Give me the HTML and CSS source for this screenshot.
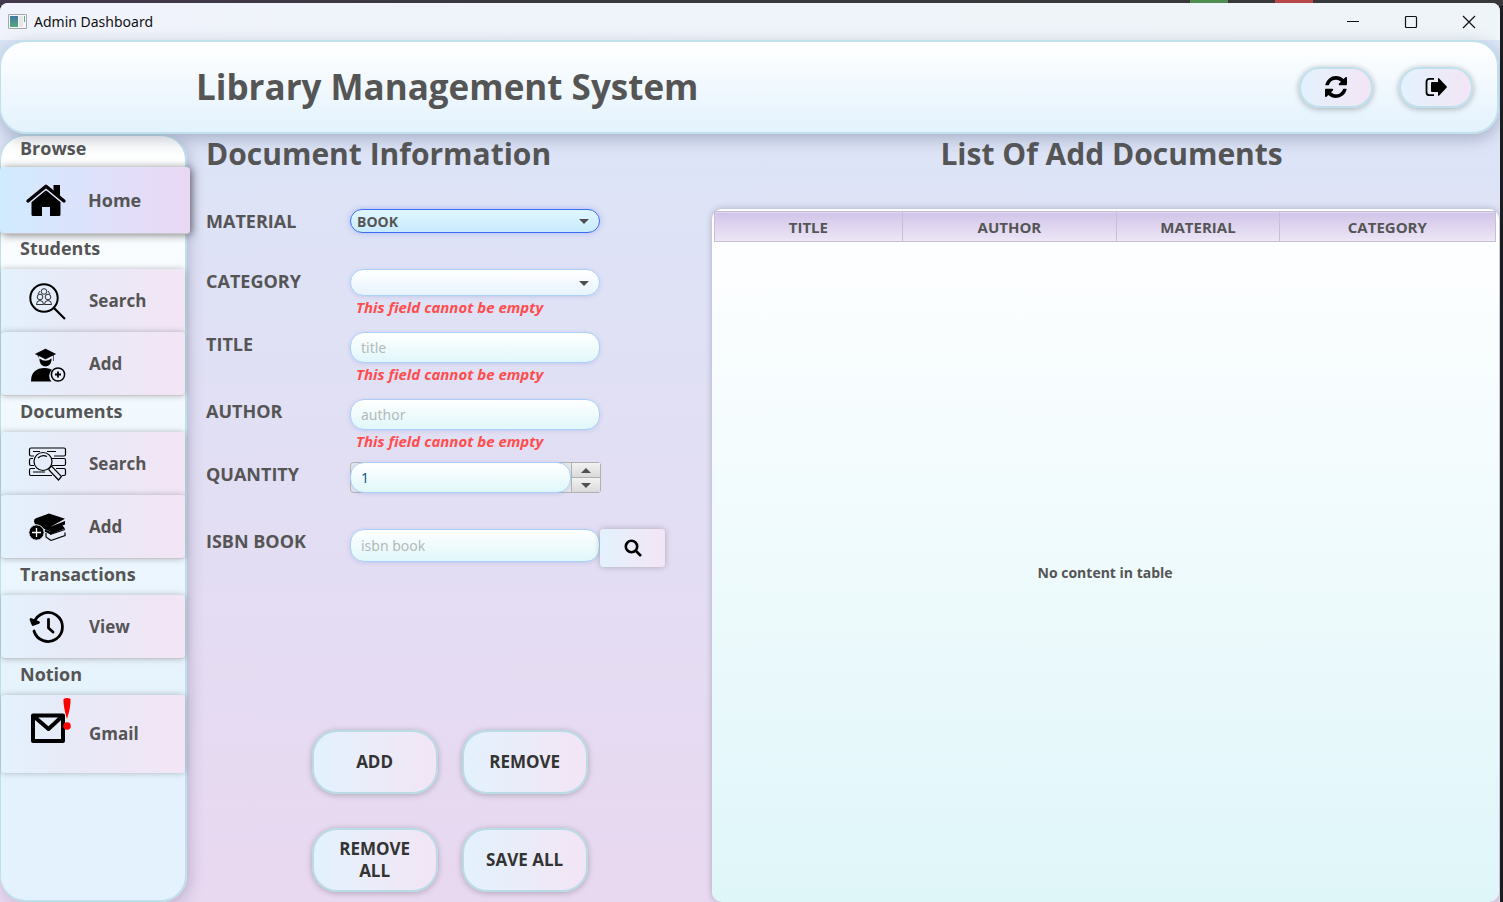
FILE: index.html
```html
<!DOCTYPE html>
<html lang="en">
<head>
<meta charset="utf-8">
<title>Admin Dashboard</title>
<link rel="stylesheet" href="styles.css">
</head>
<body>
<div class="window">
  <div class="titlebar">
    <svg class="app-icon" viewBox="0 0 19 16" aria-hidden="true">
      <defs><linearGradient id="app" x2="0" y2="1"><stop offset="0" stop-color="#4077a8"/><stop offset="1" stop-color="#58a877"/></linearGradient></defs>
      <path fill="#f5f5f5" stroke="#a3a7ae" d="M.5.5h18v14H.5z"/><path fill="url(#app)" d="M2 2h8v11H2z"/><path fill="#e3e8e6" d="M11 2h4v11h-4z"/><path fill="#6aa3a5" d="M16 2h1v6h-1z"/>
    </svg>
    <span class="titlebar-text">Admin Dashboard</span>
    <button class="win-btn" aria-label="Minimize"><svg viewBox="0 0 14 14"><path d="M1 6.500h12"/></svg></button>
    <button class="win-btn" aria-label="Maximize"><svg viewBox="0 0 14 14"><rect x="1.500" y="1.500" width="11" height="11" rx="1"/></svg></button>
    <button class="win-btn" aria-label="Close"><svg viewBox="0 0 14 14"><path d="M1 1l12 12M13 1L1 13"/></svg></button>
  </div>

  <header class="header">
    <h1>Library Management System</h1>
    <button class="pill" aria-label="Refresh">
      <svg viewBox="0 0 1536 1536"><path d="M1511 928q0 5-1 7-64 268-268 434.500t-478 166.500q-146 0-282.500-55t-243.500-157l-129 129q-19 19-45 19t-45-19-19-45v-448q0-26 19-45t45-19h448q26 0 45 19t19 45-19 45l-137 137q71 66 161 102t187 36q134 0 250-65t186-179q11-17 53-117 8-23 30-23h192q13 0 22.500 9.500t9.500 22.500zm25-800v448q0 26-19 45t-45 19h-448q-26 0-45-19t-19-45 19-45l138-138q-148-137-349-137-134 0-250 65t-186 179q-11 17-53 117-8 23-30 23h-199q-13 0-22.500-9.500t-9.500-22.500v-7q65-268 270-434.500t480-166.500q146 0 284 55.500t245 156.500l130-129q19-19 45-19t45 19 19 45z"/></svg>
    </button>
    <button class="pill" aria-label="Log out">
      <svg viewBox="0 0 22 22"><path d="M9 2.800H4.500q-3 0-3 3v10.400q0 3 3 3H9" fill="none" stroke="#000" stroke-width="1.800"/><path d="M6 7q0-1 1-1h6V3q0-1.500 1.200-.5l7.300 7.700q.8.800 0 1.600l-7.300 7.700q-1.200 1-1.200-.5v-3H7q-1 0-1-1z"/></svg>
    </button>
  </header>

  <div class="body">
    <nav class="sidebar">
      <h3>Browse</h3>
      <button class="nav active">
        <svg viewBox="0 0 40 40"><path d="M20 10L34.500 22v12.500q0 1.500-1.500 1.500H24v-9h-8v9H7q-1.500 0-1.500-1.500V22z"/><path d="M2 21L20 6.200 38 21" fill="none" stroke="#e3e4fc" stroke-width="6"/><path d="M2 21L20 6.200 38 21" fill="none" stroke="#000" stroke-width="3.400" stroke-linecap="round" stroke-linejoin="round"/><path d="M27.500 5h6.500v13l-6.500-5.500z"/></svg>
        <span>Home</span>
      </button>

      <h3>Students</h3>
      <button class="nav">
        <svg viewBox="0 0 40 40" fill="none" stroke="#000"><circle cx="17" cy="17" r="13.700" stroke-width="2"/><path d="M27 27L38 38" stroke-width="2.200"/><g stroke-width=".8"><circle cx="17" cy="10.500" r="2.800"/><circle cx="13" cy="16" r="2.800"/><circle cx="21" cy="16" r="2.800"/><path d="M11 13l2-3M23 13l-2-3M9.500 23.500q0-4 3.500-4t3.500 4zM17.500 23.500q0-4 3.500-4t3.500 4z"/></g></svg>
        <span>Search</span>
      </button>
      <button class="nav last">
        <svg viewBox="0 0 40 40"><path d="M18.500 5L28.500 10 18.500 15 8.500 10zM11 11l.5 2.500M26.500 11v6" stroke="#000" stroke-width=".6"/><path d="M12.500 14.500q6 4.500 12 0c.5 5-3 8-6 8s-6.500-3-6-8z"/><path d="M4 37.500q0-13.500 14-13.500 4 0 7 1.700a8 8 0 0 0-.5 11.800z"/><circle cx="31" cy="30.500" r="6.600" fill="none" stroke="#000" stroke-width="1.500"/><path d="M31 27.500v6M28 30.500h6" fill="none" stroke="#000" stroke-width="1.800"/></svg>
        <span>Add</span>
      </button>

      <h3>Documents</h3>
      <button class="nav">
        <svg viewBox="0 0 40 40" fill="none" stroke="#000" stroke-width="1.200"><path d="M7 12H4q-1.500 0-1.500-1.500v-5Q2.500 4 4 4h33q1.500 0 1.500 1.500v5Q38.500 12 37 12H27M6 7.500h7M20 7.500h9M6 14.500H4q-1.500 0-1.500 1.500v4q0 1.500 1.500 1.500h3M25 14.500h12q1.500 0 1.500 1.500v4q0 1.500-1.500 1.500H25M8 24.500H4q-1.500 0-1.500 1.500v4q0 1.500 1.500 1.500h21M29 24.500h8q1.500 0 1.500 1.500v4q0 1.500-1.500 1.500h-2M6 28h12"/><circle cx="16" cy="17.500" r="9"/><path d="M11 14q4-4 9-1.500M22 24.500l2.500-2.500 10 10.500-3 3.500L22 26z"/></svg>
        <span>Search</span>
      </button>
      <button class="nav last">
        <svg viewBox="0 0 40 40"><path d="M7 14q0-2 2-2.800L22 6.500 38 11.800 24 19.500v5.500L13 20q-6-2-6-6z"/><path d="M24 19.500l14-5.500v3.500l-2.500 1 2.500 3-14.500 6-6-3 .5-2 6 2.500z"/><path d="M23 27.500l15-5M24 33.500l14-5v-3M24 33.500l-5-3.500v-4" fill="none" stroke="#000" stroke-width="1.200"/><circle cx="9.500" cy="25.500" r="7.700" stroke="#e8ecfa"/><path d="M9.500 21v9M5 25.500h9" fill="none" stroke="#fff" stroke-width="1.300"/></svg>
        <span>Add</span>
      </button>

      <h3>Transactions</h3>
      <button class="nav last">
        <svg viewBox="0 0 40 40" fill="none" stroke="#000" stroke-width="2.800" stroke-linecap="round" stroke-linejoin="round"><path d="M7 16A14.500 14.500 0 1 1 7 24"/><path d="M21.500 12.500v8.500l4.500 4"/><path d="M4 12.500l2 5 5.500-2z" fill="#000"/></svg>
        <span>View</span>
      </button>

      <h3>Notion</h3>
      <button class="nav mail">
        <svg viewBox="0 0 40 48"><path d="M6 17.500h30v25.500H6zM7 18.500L21.500 31 35 18.500" fill="none" stroke="#000" stroke-width="4" stroke-linejoin="round"/><path d="M36.500 1q3.500-2 7 0 .5 7-3.500 20-4-13-3.500-20z" fill="red"/><circle cx="40" cy="28" r="3.800" fill="red"/></svg>
        <span>Gmail</span>
      </button>
    </nav>

    <main class="main">
      <section class="form-panel">
        <h2>Document Information</h2>
        <form class="form" onsubmit="return false">
          <label for="material">MATERIAL</label>
          <div class="field"><div class="select focus"><select id="material"><option>BOOK</option></select></div></div>

          <label for="category">CATEGORY</label>
          <div class="field"><div class="select"><select id="category"><option></option></select></div><p class="error">This field cannot be empty</p></div>

          <label for="title">TITLE</label>
          <div class="field"><input class="text" id="title" placeholder="title"><p class="error">This field cannot be empty</p></div>

          <label for="author">AUTHOR</label>
          <div class="field"><input class="text" id="author" placeholder="author"><p class="error">This field cannot be empty</p></div>

          <label for="quantity">QUANTITY</label>
          <div class="field"><div class="spinner"><input class="text" id="quantity" value="1"><div class="steps"><button type="button" class="up" aria-label="Increase"></button><button type="button" class="down" aria-label="Decrease"></button></div></div></div>

          <label for="isbn">ISBN BOOK</label>
          <div class="field isbn"><input class="text" id="isbn" placeholder="isbn book"><button type="button" class="lookup" aria-label="Search ISBN"><svg viewBox="0 0 18 18"><circle cx="7.500" cy="7.500" r="5.700"/><path d="M11.500 11.500L17 17"/></svg></button></div>
        </form>
        <div class="actions">
          <button>ADD</button><button>REMOVE</button>
          <button>REMOVE ALL</button><button>SAVE ALL</button>
        </div>
      </section>

      <section class="list-panel">
        <h2>List Of Add Documents</h2>
        <div class="table-box">
          <table>
            <colgroup><col class="c-title"><col class="c-author"><col class="c-material"><col class="c-category"></colgroup>
            <thead><tr><th>TITLE</th><th>AUTHOR</th><th>MATERIAL</th><th>CATEGORY</th></tr></thead>
          </table>
          <div class="empty">No content in table</div>
        </div>
      </section>
    </main>
  </div>
</div>
</body>
</html>
```
FILE: styles.css
```css
* { box-sizing: border-box; }
body {
  margin: 0;
  height: 100vh;
  padding: 3px 3px 0 0;
  display: flex;
  overflow: hidden;
  background:
    linear-gradient(#4f8c50, #4f8c50) 1190px 0 / 38px 3px no-repeat,
    linear-gradient(#b84848, #b84848) 1275px 0 / 38px 3px no-repeat,
    linear-gradient(90deg, #43384d, #38383a 40%) 0 0 / 100% 6px no-repeat,
    #1c1d20;
  font-family: "Open Sans", "Noto Sans", sans-serif;
  font-weight: 700;
  color: #555;
}
h1, h2, h3, p { margin: 0; }
button, input, select { font: inherit; color: inherit; margin: 0; }
button { padding: 0; border: 0; }

.window {
  flex: 1;
  min-width: 0;
  display: flex;
  flex-direction: column;
  border-radius: 8px 8px 0 0;
  overflow: hidden;
  background: linear-gradient(#dbe6f8, #e8d8f0);
}
.titlebar {
  height: 37px;
  flex: none;
  display: flex;
  align-items: center;
  padding: 0 2px 0 8px;
  background: linear-gradient(90deg, #f0f3fb, #eef4f8);
  color: #111;
  font-family: "Noto Sans", sans-serif;
  font-size: 14px;
  font-weight: 400;
}
.app-icon { width: 19px; height: 16px; margin-right: 7px; }
.titlebar-text { flex: 1; }
.win-btn {
  width: 58px;
  height: 36px;
  display: grid;
  place-items: center;
  background: none;
}
.win-btn svg { width: 14px; height: 14px; fill: none; stroke: #111; stroke-width: 1.2; }

.header {
  height: 94px;
  flex: none;
  position: relative;
  z-index: 2;
  display: flex;
  align-items: center;
  gap: 26px;
  margin-right: 1px;
  padding: 0 24px 0 195px;
  border: 2px solid #c0e1eb;
  border-left-width: 1px;
  border-radius: 26px;
  background: linear-gradient(#fff, #e3f2fd);
  box-shadow: 0 5px 16px rgba(90, 100, 130, .4);
}
h1 { flex: 1; font-size: 35px; line-height: 48px; }
.pill {
  width: 74px;
  height: 41px;
  display: grid;
  place-items: center;
  border: 2px solid #bfe0ec;
  border-radius: 21px;
  background: linear-gradient(90deg, #e3f2fd, #f3e5f5);
  box-shadow: 0 1px 6px rgba(0, 0, 0, .3);
}
.pill svg { width: 22px; height: 22px; }

.body { flex: 1; min-height: 0; display: flex; }
.sidebar {
  width: 187px;
  flex: none;
  position: relative;
  z-index: 1;
  border: 2px solid #bfe0ea;
  border-left-width: 1px;
  border-radius: 26px;
  background: linear-gradient(#fff, #e3f2fd 80%);
  box-shadow: 3px 3px 14px rgba(100, 90, 140, .3);
}
h3 {
  height: 36px;
  padding: 3px 0 0 19px;
  font-size: 18px;
  line-height: 24px;
}
h3:first-child { height: 33px; padding-top: 0; }
.nav {
  width: 100%;
  height: 63px;
  display: flex;
  align-items: center;
  gap: 22px;
  padding: 0 0 0 26px;
  border-radius: 4px;
  background: linear-gradient(90deg, #e3f2fd, #e8eaf8 35%, #f3e5f5);
  box-shadow: 0 0 6px rgba(0, 0, 0, .25);
  font-size: 17px;
}
.nav svg { width: 40px; height: 40px; flex: none; overflow: visible; }
.nav.last, .nav.active { border-bottom: 1px solid #c8c8cc; height: 64px; }
.nav.active {
  position: relative;
  width: 190px;
  height: 67px;
  margin: -2px 0 -1px -1px;
  background: linear-gradient(90deg, #d0ebff, #e0dffa 60%, #ead8f5);
  box-shadow: 2px 1px 8px rgba(0, 0, 0, .5);
  font-size: 18px;
}
.nav.mail { height: 78px; padding-bottom: 2px; }
.nav.mail svg { height: 48px; margin-bottom: 22px; }

.main { flex: 1; min-width: 0; display: flex; }
.form-panel {
  flex: 0 0 40%;
  display: flex;
  flex-direction: column;
  padding: 0 19px 10px;
}
h2 { font-size: 30px; line-height: 40px; }
.form {
  display: grid;
  grid-template-columns: 144px 1fr;
  grid-template-rows: 60px 63px 67px 63px 67px auto;
  align-items: start;
  margin-top: 35px;
}
.form label { font-size: 18px; line-height: 24px; }
.field { width: 250px; }
.select { position: relative; }
.select select {
  display: block;
  width: 100%;
  height: 27px;
  padding: 0 26px 0 6px;
  appearance: none;
  border: 1px solid #a8d0fa;
  border-radius: 14px;
  background: linear-gradient(#fff, #e8f3fe);
  box-shadow: 0 1px 4px rgba(90, 110, 190, .2);
  font-size: 14px;
}
.select.focus select {
  height: 24px;
  border-color: #3c6cf0;
  background: linear-gradient(#e0f6ff, #c8ebfd);
  box-shadow: 0 0 6px rgba(80, 110, 240, .35);
}
.select::after {
  content: "";
  position: absolute;
  right: 11px;
  top: calc(50% - 2px);
  border: 5px solid transparent;
  border-top-color: #505050;
  border-bottom: 0;
  pointer-events: none;
}
.text {
  display: block;
  width: 100%;
  height: 31px;
  padding: 0 10px;
  border: 1px solid #a8d0fa;
  border-radius: 14px;
  background: linear-gradient(#fff, #e0f7fa);
  box-shadow: 0 1px 4px rgba(90, 110, 190, .2);
  font-family: "Noto Sans", sans-serif;
  font-size: 14px;
  font-weight: 400;
  color: #16548c;
}
.text::placeholder { color: #b4b9b9; opacity: 1; }
.error {
  padding-left: 6px;
  font-size: 15px;
  line-height: 22px;
  font-style: italic;
  color: #ff4d4d;
}
.spinner {
  display: flex;
  width: 251px;
  height: 31px;
  border-radius: 4px;
  background: #e8e8ea;
  box-shadow: inset 0 0 0 1px #b5b5b5;
}
.spinner .text { flex: 1; min-width: 0; }
.steps {
  width: 30px;
  display: grid;
  gap: 1px;
  border: 1px solid #b0b0b0;
  border-radius: 0 4px 4px 0;
  background: #b0b0b0;
}
.steps button { display: grid; place-items: center; background: linear-gradient(#f2f2f2, #dadada); }
.steps button::after { content: ""; border: 5px solid transparent; }
.steps .up::after { border-top: 0; border-bottom-color: #505050; }
.steps .down::after { border-bottom: 0; border-top-color: #505050; }
.isbn { display: flex; width: 315px; }
.isbn .text { flex: 1; min-width: 0; height: 33px; }
.lookup {
  width: 65px;
  height: 38px;
  display: grid;
  place-items: center;
  border-radius: 4px;
  background: linear-gradient(90deg, #e3f2fd, #f3e5f5);
  box-shadow: 0 0 6px rgba(0, 0, 0, .25);
}
.lookup svg { width: 18px; height: 18px; fill: none; stroke: #000; stroke-width: 2.6; }

.actions {
  display: grid;
  grid-template-columns: 126px 126px;
  grid-auto-rows: 64px;
  gap: 34px 24px;
  justify-content: center;
  margin-top: auto;
}
.actions button {
  padding: 0 20px;
  border: 2px solid #b9dbe6;
  border-radius: 25px;
  background: linear-gradient(90deg, #e3f2fd, #f3e5f5);
  box-shadow: 0 1px 6px rgba(0, 0, 0, .25);
  color: #333;
  font-size: 17px;
  line-height: 22px;
}

.list-panel {
  flex: 1;
  min-width: 0;
  display: flex;
  flex-direction: column;
  padding-right: 1px;
}
.list-panel h2 { padding-left: 12px; text-align: center; }
.table-box {
  flex: 1;
  display: flex;
  flex-direction: column;
  margin-top: 35px;
  padding: 2px 3px 0 2px;
  border-radius: 10px;
  background: linear-gradient(#fff, #fcfeff 10%, #dff6f9);
  box-shadow: 0 0 6px rgba(60, 70, 100, .35);
}
table { width: 100%; table-layout: fixed; border-collapse: collapse; font-size: 15px; line-height: 20px; }
.c-title { width: 24%; }
.c-author { width: 27.5%; }
.c-material { width: 20.8%; }
th {
  height: 30px;
  padding: 0;
  border: 1px solid #c8bfd4;
  background: linear-gradient(#d1c4e9, #ede7f6);
}
.empty { flex: 1; display: grid; place-items: center; font-size: 14px; }
```
